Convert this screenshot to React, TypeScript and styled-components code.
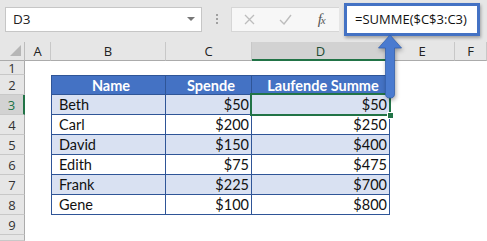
import React from 'react';
import styled, { createGlobalStyle } from 'styled-components';

const Global = createGlobalStyle`
  html, body { margin: 0; padding: 0; background: #fff; }
  body { width: 487px; height: 241px; overflow: hidden; }
`;

const Frame = styled.div`
  position: relative;
  width: 487px;
  height: 241px;
  overflow: hidden;
  background: #fff;
  font-family: "Open Sans", "Noto Sans", sans-serif;
`;

const Toolbar = styled.div`
  display: flex;
  align-items: center;
  height: 42px;
  padding-bottom: 4px;
  box-sizing: border-box;
  background: #e6e6e6;
`;

const NameBox = styled.div`
  display: flex;
  align-items: center;
  justify-content: space-between;
  margin-left: 5px;
  width: 197px;
  height: 25px;
  box-sizing: border-box;
  border: 1px solid #c6c6c6;
  background: #fff;
  padding: 0 6px 0 7px;
  font-size: 13.5px;
  color: #222;
`;

const DropTri = styled.span`
  width: 0;
  height: 0;
  border-left: 4px solid transparent;
  border-right: 4px solid transparent;
  border-top: 4px solid #777;
`;

const Dots = styled.div`
  display: flex;
  flex-direction: column;
  gap: 2px;
  margin-left: 14px;
  & > span { width: 2px; height: 2px; background: #a0a0a0; }
`;

const ButtonGroup = styled.div`
  display: flex;
  align-items: center;
  margin-left: 13px;
  width: 108px;
  height: 25px;
  box-sizing: border-box;
  border: 1px solid #d6d6d6;
  border-right: none;
  background: #f7f7f7;
`;

const IconSlot = styled.div`
  width: 36px;
  display: flex;
  align-items: center;
  justify-content: center;
`;

const Fx = styled.span`
  font-family: "Liberation Serif", "DejaVu Serif", serif;
  font-style: italic;
  font-size: 15px;
  color: #555;
  letter-spacing: -1px;
  & > small { font-size: 11px; }
`;

const FormulaBox = styled.div`
  display: flex;
  align-items: center;
  margin-left: 5px;
  width: 136px;
  height: 33px;
  box-sizing: border-box;
  border: 3px solid #4472c4;
  background: #fff;
  box-shadow: 1px 2px 3px rgba(0, 0, 0, 0.3);
  padding-left: 8px;
  font-size: 13px;
  color: #111;
`;

const Sheet = styled.div`
  display: grid;
  grid-template-columns: 25px 26px 115px 86px 138px 65px 32px;
  grid-template-rows: 19px 14px repeat(8, 20px) 6px;
`;

const Corner = styled.div`
  background: #e6e6e6;
  border-right: 1px solid #bcbcbc;
  border-bottom: 1px solid #ababab;
  display: flex;
  align-items: flex-end;
  justify-content: flex-end;
  padding: 0 3px 4px 0;
  box-sizing: border-box;
  & > span {
    width: 0;
    height: 0;
    border-left: 11px solid transparent;
    border-bottom: 11px solid #b6b6b6;
  }
`;

const ColHead = styled.div<{ $sel?: boolean }>`
  background: ${(p) => (p.$sel ? '#d2d2d2' : '#e6e6e6')};
  border-right: 1px solid #c8c8c8;
  border-bottom: ${(p) => (p.$sel ? '2px solid #217346' : '1px solid #ababab')};
  box-sizing: border-box;
  display: flex;
  align-items: center;
  justify-content: center;
  font-size: 13px;
  color: ${(p) => (p.$sel ? '#1f4d33' : '#222')};
`;

const RowHead = styled.div<{ $sel?: boolean }>`
  background: ${(p) => (p.$sel ? '#d2d2d2' : '#e6e6e6')};
  border-right: ${(p) => (p.$sel ? '2px solid #217346' : '1px solid #ababab')};
  border-bottom: 1px solid #c8c8c8;
  box-sizing: border-box;
  display: flex;
  align-items: center;
  justify-content: center;
  font-size: 13px;
  color: ${(p) => (p.$sel ? '#217346' : '#333')};
`;

const Blank = styled.div`
  background: #fff;
`;

const TCell = styled.div<{
  $head?: boolean;
  $band?: boolean;
  $right?: boolean;
  $left?: boolean;
  $top?: boolean;
}>`
  position: relative;
  box-sizing: border-box;
  background: ${(p) => (p.$head ? '#4472c4' : p.$band ? '#d9e1f2' : '#fff')};
  border-right: 1px solid #2f5597;
  border-bottom: 1px solid #2f5597;
  border-left: ${(p) => (p.$left ? '1px solid #2f5597' : 'none')};
  border-top: ${(p) => (p.$top ? '1px solid #2f5597' : 'none')};
  display: flex;
  align-items: center;
  justify-content: ${(p) => (p.$head ? 'center' : p.$right ? 'flex-end' : 'flex-start')};
  padding: 0 2px 0 7px;
  font-family: "Lato", "Liberation Sans", sans-serif;
  font-size: 14.5px;
  font-weight: ${(p) => (p.$head ? 700 : 400)};
  color: ${(p) => (p.$head ? '#fff' : '#111')};
  white-space: nowrap;
`;

const Selection = styled.div`
  position: absolute;
  z-index: 2;
  left: -2px;
  top: -2px;
  right: -2px;
  bottom: -2px;
  border: 2px solid #217346;
  pointer-events: none;
`;

const FillHandle = styled.div`
  position: absolute;
  right: -5px;
  bottom: -5px;
  width: 5px;
  height: 5px;
  background: #217346;
  border: 1px solid #fff;
`;

const Arrow = styled.svg`
  position: absolute;
  z-index: 3;
  left: 376px;
  top: 33px;
  overflow: visible;
  filter: drop-shadow(1px 2px 2px rgba(0, 0, 0, 0.35));
`;

const cols = ['A', 'B', 'C', 'D', 'E', 'F'];

const data: [string, string, string][] = [
  ['Beth', '$50', '$50'],
  ['Carl', '$200', '$250'],
  ['David', '$150', '$400'],
  ['Edith', '$75', '$475'],
  ['Frank', '$225', '$700'],
  ['Gene', '$100', '$800'],
];

export default function App() {
  return (
    <Frame>
      <Global />
      <Toolbar>
        <NameBox>
          <span>D3</span>
          <DropTri />
        </NameBox>
        <Dots>
          <span />
          <span />
          <span />
        </Dots>
        <ButtonGroup>
          <IconSlot>
            <svg width="11" height="11" viewBox="0 0 11 11">
              <path d="M1 1 L10 10 M10 1 L1 10" stroke="#bdbdbd" strokeWidth="1.3" fill="none" />
            </svg>
          </IconSlot>
          <IconSlot>
            <svg width="13" height="11" viewBox="0 0 13 11">
              <path d="M1 6 L5 10 L12 1" stroke="#bdbdbd" strokeWidth="1.4" fill="none" />
            </svg>
          </IconSlot>
          <IconSlot>
            <Fx>
              f<small>x</small>
            </Fx>
          </IconSlot>
        </ButtonGroup>
        <FormulaBox>=SUMME($C$3:C3)</FormulaBox>
      </Toolbar>
      <Sheet>
        <Corner>
          <span />
        </Corner>
        {cols.map((c) => (
          <ColHead key={c} $sel={c === 'D'}>
            {c}
          </ColHead>
        ))}

        <RowHead>1</RowHead>
        {cols.map((c) => (
          <Blank key={'r1' + c} />
        ))}

        <RowHead>2</RowHead>
        <Blank />
        <TCell $head $left $top>Name</TCell>
        <TCell $head $top>Spende</TCell>
        <TCell $head $top>Laufende Summe</TCell>
        <Blank />
        <Blank />

        {data.map(([name, amount, total], i) => {
          const row = i + 3;
          const band = i % 2 === 0;
          return (
            <React.Fragment key={name}>
              <RowHead $sel={row === 3}>{row}</RowHead>
              <Blank />
              <TCell $band={band} $left>
                {name}
              </TCell>
              <TCell $band={band} $right>
                {amount}
              </TCell>
              <TCell $band={band} $right>
                {total}
                {row === 3 && (
                  <Selection>
                    <FillHandle />
                  </Selection>
                )}
              </TCell>
              <Blank />
              <Blank />
            </React.Fragment>
          );
        })}

        <RowHead>9</RowHead>
        {cols.map((c) => (
          <Blank key={'r9' + c} />
        ))}
        <RowHead />
        {cols.map((c) => (
          <Blank key={'r10' + c} />
        ))}
      </Sheet>
      <Arrow width="28" height="66" viewBox="0 0 28 66">
        <path
          d="M14 2 L25.5 15 L18.5 15 L18.5 61 Q18.5 65 14 65 Q9.5 65 9.5 61 L9.5 15 L2.5 15 Z"
          fill="#4a7bd0"
          stroke="#3461ad"
          strokeWidth="0.8"
        />
      </Arrow>
    </Frame>
  );
}
